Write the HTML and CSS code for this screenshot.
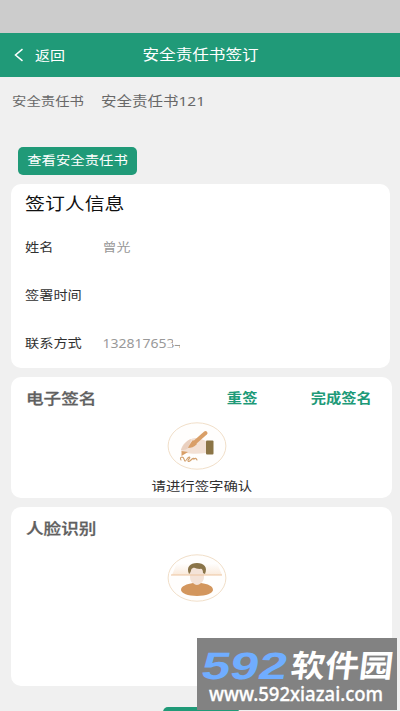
FILE: index.html
```html
<!DOCTYPE html>
<html lang="zh-CN">
<head>
<meta charset="utf-8">
<title>安全责任书签订</title>
<link rel="stylesheet" href="styles.css">
</head>
<body>
<div class="statusbar"></div>
<header class="nav">
  <svg class="back" viewBox="0 0 10 14"><path d="M8.500 1.200 1.500 7l7 5.800"/></svg>
  <span class="t nav-back">返回</span>
  <span class="t nav-title">安全责任书签订</span>
</header>
<main>
  <div class="doc"><span class="t doc-label">安全责任书</span><span class="t doc-name">安全责任书121</span></div>
  <button class="view"><span class="t">查看安全责任书</span></button>
  <section class="card info">
    <h2><span class="t">签订人信息</span></h2>
    <div class="row"><span class="t label">姓名</span><span class="t value">曾光</span></div>
    <div class="row"><span class="t label">签署时间</span></div>
    <div class="row"><span class="t label">联系方式</span><span class="t value phone">132817653<span class="faded">4</span></span></div>
  </section>
  <section class="card sign">
    <div class="head"><span class="t title">电子签名</span><span class="t action">重签</span><span class="t action done">完成签名</span></div>
    <svg class="picture" viewBox="0 0 60 48">
      <ellipse class="ring" cx="30" cy="24" rx="28.900" ry="23.200"/>
      <path fill="#f3e1d5" d="M14 28c1-6 7-11 14-12 5 0 8 2 11 3v12c-7 1-15 1-20 0-2 1-4 0-5-3z"/>
      <path fill="#ead0bf" d="M14 28c2-5 5-9 10-11l-2 8c-2 3-5 3-8 3z"/>
      <path stroke="#d99f68" stroke-width="4" stroke-linecap="round" d="M38.500 11 26 22"/>
      <path fill="#d99f68" d="m26 18 4 4c-3 3-6 4-9 4 1-3 3-5 5-8zM14.500 29l6.500 1-6.500 4z"/>
      <rect x="39" y="18.500" width="7.500" height="14" rx="1" fill="#8b7445"/>
      <path stroke="#d3a16e" stroke-width="1.100" stroke-linecap="round" fill="none" d="M14 38c-2-3 2-4 3-1s1 3 3 0c2-3 4-2 2 0s-1 4 2 1c2-2 3-2 3-1 1-1 2-1 3 1"/>
    </svg>
    <p><span class="t">请进行签字确认</span></p>
  </section>
  <section class="card face">
    <div class="head"><span class="t title">人脸识别</span></div>
    <svg class="picture" viewBox="0 0 60 48">
      <defs><linearGradient id="scan" x1="0" y1="0" x2="0" y2="1"><stop offset="0" stop-color="#fff"/><stop offset="1" stop-color="#faeadb"/></linearGradient></defs>
      <ellipse class="ring" cx="30" cy="24" rx="28.900" ry="23.200"/>
      <path fill="url(#scan)" d="M10 9h40l5 12H5z"/>
      <path fill="#f4e3d8" d="M23 15q7-4 14 0v8c0 4-3 6-4 7v4h-6v-4c-2-1-4-3-4-7z"/>
      <path fill="#8a7449" d="M22 20c-3-7 1-11 8-11 7 0 11 4 8 11l-2-1c0-3-1-5-3-4-4 0-5-2-7-1-3 1-1 4-4 6z"/>
      <path fill="#d3965d" d="M14 36c0-4 6-6 12-7q4 4 8 0c7 1 12 3 12 7 0 3-7 6-16 6s-16-3-16-6z"/>
      <path stroke="#edc49f" stroke-width="1" d="M4 21h51"/>
    </svg>
  </section>
  <button class="submit" aria-label="submit"></button>
</main>
<aside class="watermark">
  <div class="brand"><span class="digits">592</span><span class="name">软件园</span></div>
  <div class="site"><span>www.592xiazai.com</span></div>
</aside>
</body>
</html>
```
FILE: styles.css
```css
* { box-sizing: border-box; }
body {
  margin: 0;
  width: 400px;
  height: 711px;
  overflow: hidden;
  position: relative;
  background: #f0f0f0;
  font-family: "Noto Sans", "Noto Sans CJK SC", sans-serif;
  font-size: 14.4px;
  color: #303030;
}
.t {
  display: inline-block;
  line-height: 20px;
  white-space: nowrap;
  transform: scaleY(.86);
}
button { border: 0; padding: 0; font: inherit; display: block; }
.statusbar { height: 33px; background: #ccc; }
.nav {
  height: 44px;
  background: #209a78;
  color: #fff;
  display: flex;
  align-items: center;
  padding: 0 0 1px 14px;
}
.back { width: 10px; height: 14px; fill: none; stroke: #fff; stroke-width: 1.5; }
.nav-back { margin-left: 11px; font-size: 15px; width: 30px; }
.nav-title { margin-left: 77.500px; font-size: 16.600px; }
.doc { height: 70px; padding: 11px 0 0 12px; display: flex; color: #686868; }
.doc-label { width: 89px; padding-top: 1px; }
.doc-name { font-size: 15.5px; }
.view {
  width: 119px;
  height: 28px;
  margin-left: 18px;
  border-radius: 5px;
  background: #209a78;
  color: #fff;
}
.card { margin-left: 11px; width: 381px; background: #fff; border-radius: 10px; }
.info { width: 379px; height: 184px; margin-top: 9px; padding: 10px 0 0 14px; }
h2 { margin: 0; height: 30px; font-size: 19.900px; font-weight: 400; line-height: 20px; color: #111; }
.row { height: 48px; display: flex; align-items: center; }
.label { width: 77.500px; font-size: 14.200px; }
.value { color: #999; font-size: 14px; }
.phone { position: relative; }
.faded { position: relative; }
.faded::before {
  content: "";
  position: absolute;
  left: -8px;
  top: 9px;
  width: 5px;
  height: 5px;
  background: #fff;
}
.faded::after {
  content: "";
  position: absolute;
  left: -2px;
  top: 0;
  width: 12px;
  height: 16px;
  background: linear-gradient(#fff, #fff) 0 0 / 12px 11px no-repeat, linear-gradient(#fff, #fff) 7px 0 / 5px 16px no-repeat;
}
.sign { height: 121px; margin-top: 9px; }
.head { height: 44px; padding: 10px 0 0 15px; display: flex; }
.title { width: 201px; font-size: 17.600px; font-weight: 500; color: #606060; -webkit-text-stroke: .3px #606060; }
.sign .title { width: 201px; }
.action { width: 84px; font-size: 15.300px; font-weight: 700; color: #209a78; position: relative; left: 1.500px; }
.done { left: 2px; }
.picture { display: block; width: 60px; height: 48px; margin-left: 156px; }
.sign .picture { margin-top: 1px; }
.ring { fill: #fffefd; stroke: #f1dfc9; stroke-width: 1; }
p { margin: 7px 0 0 140.500px; line-height: 20px; }
.face { height: 179px; margin-top: 9px; }
.face .head { height: 47px; }
.submit { width: 76px; height: 36px; margin: 21px 0 0 163px; border-radius: 5px; background: #209a78; }
.watermark {
  position: absolute;
  left: 197px;
  top: 638px;
  width: 200px;
  height: 72px;
  padding: 12px 0 0 5px;
  background: #828282;
  color: #fff;
}
.brand { height: 34px; display: flex; line-height: 32px; }
.digits {
  width: 89px;
  font-family: "Liberation Sans", sans-serif;
  font-size: 38px;
  font-weight: 700;
  color: #70adff;
  transform: scaleX(1.35) skewX(-8deg);
  transform-origin: left center;
}
.name {
  font-family: "Noto Sans CJK SC", sans-serif;
  font-size: 31px;
  line-height: 28px;
  font-weight: 700;
  transform: scaleX(1.1) skewX(-6deg);
  transform-origin: left center;
}
.site { height: 24px; padding-left: 7px; font: 500 20px/20px "Noto Sans", sans-serif; }
.site span { display: inline-block; transform: scaleX(.927); transform-origin: left center; -webkit-text-stroke: .3px #fff; }
```
